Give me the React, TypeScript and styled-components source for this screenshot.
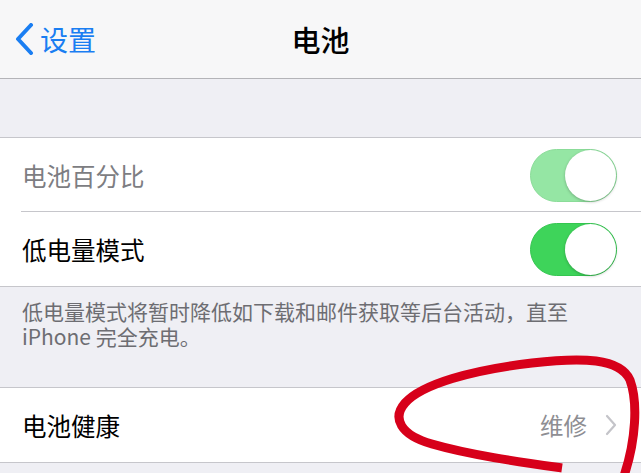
import styled, { createGlobalStyle } from 'styled-components';

const GlobalStyle = createGlobalStyle`
  html, body {
    margin: 0;
    padding: 0;
    background: #efeff4;
    font-family: "Noto Sans CJK SC", "Noto Sans", sans-serif;
    -webkit-font-smoothing: antialiased;
  }
`;

const Screen = styled.div`
  position: relative;
  width: 641px;
  height: 473px;
  overflow: hidden;
  background: #efeff4;
`;

const NavBar = styled.header`
  display: grid;
  grid-template-columns: 1fr auto 1fr;
  align-items: center;
  height: 78px;
  background: #f7f7f8;
  border-bottom: 1px solid #b4b4b8;
`;

const BackButton = styled.div`
  display: flex;
  align-items: center;
  gap: 5px;
  padding-left: 13px;
  color: #1a7ef2;
  font-size: 28px;
  line-height: 1;
`;

const NavTitle = styled.h1`
  margin: 0;
  font-size: 29px;
  font-weight: 500;
  color: #000;
`;

const Spacer = styled.div<{ $h: number }>`
  height: ${(p) => p.$h}px;
`;

const Group = styled.section`
  background: #fff;
  border-top: 1px solid #c6c6cb;
  border-bottom: 1px solid #c6c6cb;
`;

const Row = styled.div<{ $divider?: boolean }>`
  position: relative;
  display: flex;
  align-items: center;
  justify-content: space-between;
  height: 74px;
  padding: 0 24px 0 22px;
  box-sizing: border-box;
  ${(p) =>
    p.$divider &&
    `
    &::after {
      content: '';
      position: absolute;
      left: 21px;
      right: 0;
      bottom: 0;
      height: 1px;
      background: #c6c6cb;
    }
  `}
`;

const Label = styled.span<{ $dim?: boolean }>`
  font-size: 24.5px;
  color: ${(p) => (p.$dim ? '#7d7d82' : '#000')};
`;

const Switch = styled.div<{ $faded?: boolean }>`
  position: relative;
  width: 87px;
  height: 53px;
  border-radius: 27px;
  background: ${(p) => (p.$faded ? '#95e6a4' : '#3ed45a')};
  box-sizing: border-box;
  border: 1px solid ${(p) => (p.$faded ? '#8bdc99' : '#35c650')};

  &::after {
    content: '';
    position: absolute;
    right: 0;
    top: 0;
    width: 51px;
    height: 51px;
    border-radius: 50%;
    background: #fff;
    box-shadow: 0 1px 3px rgba(0, 0, 0, 0.25);
  }
`;

const Footer = styled.div`
  height: 100px;
  box-sizing: border-box;
  padding: 12px 22px 0;
  font-size: 21px;
  line-height: 25px;
  color: #6d6d72;
`;

const FooterLine = styled.div`
  white-space: nowrap;
`;

const Detail = styled.div`
  display: flex;
  align-items: center;
  gap: 18px;
  color: #8e8e93;
  font-size: 23.5px;
`;

const Annotation = styled.svg`
  position: absolute;
  inset: 0;
  pointer-events: none;
`;

export default function App() {
  return (
    <>
      <GlobalStyle />
      <Screen>
        <NavBar>
          <BackButton>
            <svg width="22" height="32" viewBox="0 0 22 32">
              <path d="M18 2 L5 16 L18 30" fill="none" stroke="#1a7ef2" strokeWidth="4" strokeLinecap="round" strokeLinejoin="round" />
            </svg>
            设置
          </BackButton>
          <NavTitle>电池</NavTitle>
          <div />
        </NavBar>
        <Spacer $h={58} />
        <Group>
          <Row $divider>
            <Label $dim>电池百分比</Label>
            <Switch $faded />
          </Row>
          <Row>
            <Label>低电量模式</Label>
            <Switch />
          </Row>
        </Group>
        <Footer>
          <FooterLine>低电量模式将暂时降低如下载和邮件获取等后台活动，直至</FooterLine>
          <FooterLine>iPhone 完全充电。</FooterLine>
        </Footer>
        <Group>
          <Row>
            <Label>电池健康</Label>
            <Detail>
              维修
              <svg width="12" height="22" viewBox="0 0 12 22">
                <path d="M2 2 L10 11 L2 20" fill="none" stroke="#c4c4c9" strokeWidth="2.2" strokeLinecap="round" strokeLinejoin="round" />
              </svg>
            </Detail>
          </Row>
        </Group>
        <Annotation width="641" height="473" viewBox="0 0 641 473">
          <path
            d="M562 468 C 520 462, 470 455, 432 444 C 400 435, 392 418, 405 403 C 422 384, 472 370, 532 363 C 582 357, 620 358, 630 380 C 638 402, 636 440, 624 476"
            fill="none"
            stroke="#d7001a"
            strokeWidth="9"
            strokeLinecap="butt"
            strokeLinejoin="round"
          />
        </Annotation>
      </Screen>
    </>
  );
}
